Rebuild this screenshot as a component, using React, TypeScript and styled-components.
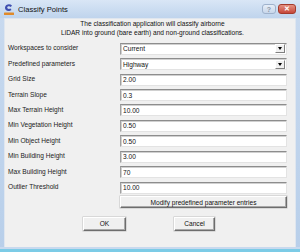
import {Fragment} from "react";
import styled, {createGlobalStyle} from "styled-components";

const Global = createGlobalStyle`
	html, body { margin: 0; padding: 0; background: #ffffff; }
	body { font-family: "Liberation Sans", Arial, sans-serif; }
`;

const Win = styled.div`
	width: 300px;
	height: 252px;
	display: flex;
	flex-direction: column;
	background: linear-gradient(#c9daef, #b8cfea);
	overflow: hidden;
`;
const TitleBar = styled.div`
	height: 18px;
	display: flex;
	align-items: center;
	padding: 0 4px 0 3px;
	background: linear-gradient(#d9e6f6, #bfd4ed);
`;
const Title = styled.span`
	font-size: 7.6px;
	color: #111;
	margin-left: 3px;
	flex: 1;
`;
const CapBtn = styled.div<{$close?: boolean}>`
	height: 10px;
	width: ${p => p.$close ? "18px" : "14px"};
	margin-left: 2px;
	border-radius: 3px;
	border: 1px solid ${p => p.$close ? "#a33a2c" : "#9fb2cc"};
	background: ${p => p.$close ? "linear-gradient(#e49182, #c6473a)" : "linear-gradient(#e6eef8, #c7d6ea)"};
	color: ${p => p.$close ? "#fff" : "#8a97a8"};
	font-size: 7px;
	font-weight: bold;
	display: flex;
	align-items: center;
	justify-content: center;
	box-sizing: border-box;
`;
const Body = styled.div`
	flex: 1;
	margin: 0 4px;
	background: #f0f0f0;
	border: 1px solid #dfe6ef;
	border-bottom: none;
	display: flex;
	flex-direction: column;
`;
const Description = styled.div`
	margin-top: 1px;
	padding-left: 5px;
	text-align: center;
	font-size: 6.6px;
	line-height: 8.5px;
	color: #111;
`;
const Form = styled.div`
	margin-top: 3px;
	display: grid;
	grid-template-columns: 112px 167px;
	grid-auto-rows: 15.45px;
	padding-left: 3px;
	align-items: center;
`;
const Label = styled.span`
	font-size: 6.6px;
	color: #222;
`;
const Field = styled.div`
	height: 12px;
	box-sizing: border-box;
	background: #fff;
	border-top: 1px solid #8d8d8d;
	border-left: 1px solid #a0a0a0;
	border-right: 1px solid #e3e3e3;
	border-bottom: 1px solid #e3e3e3;
	box-shadow: inset 1px 1px 0 #d0d0d0;
	font-size: 6.6px;
	color: #111;
	display: flex;
	align-items: center;
	padding-left: 2px;
	margin-top: 2px;
`;
const SelectText = styled.span`
	flex: 1;
`;
const Arrow = styled.div`
	width: 10px;
	height: 9px;
	margin-right: 1px;
	background: #f0f0f0;
	border-right: 1px solid #808080;
	border-bottom: 1px solid #808080;
	border-top: 1px solid #fff;
	border-left: 1px solid #fff;
	box-sizing: border-box;
	display: flex;
	align-items: center;
	justify-content: center;
	&::after {
		content: "";
		border-left: 2.5px solid transparent;
		border-right: 2.5px solid transparent;
		border-top: 3px solid #000;
	}
`;
const Button = styled.div<{$w?: number}>`
	height: ${p => p.$w ? "14px" : "12px"};
	width: ${p => p.$w ? p.$w + "px" : "auto"};
	box-sizing: border-box;
	background: #f0f0f0;
	border-top: 1px solid #fff;
	border-left: 1px solid #fff;
	border-right: 1px solid #6d6d6d;
	border-bottom: 1px solid #6d6d6d;
	box-shadow: inset -1px -1px 0 #a8a8a8, 0 0 0 0.5px #c0c0c0;
	font-size: 6.6px;
	color: #111;
	display: flex;
	align-items: center;
	justify-content: center;
`;
const Actions = styled.div`
	display: flex;
	gap: 48px;
	padding-left: 78px;
	margin-top: 7px;
`;
const Frame = styled.div`
	height: 5px;
	display: flex;
	flex-direction: column;
`;
const FrameLine = styled.div<{$c: string; $h: number}>`
	height: ${p => p.$h}px;
	background: ${p => p.$c};
`;

const rows: [string, string][] = [
	["Grid Size", "2.00"],
	["Terrain Slope", "0.3"],
	["Max Terrain Height", "10.00"],
	["Min Vegetation Height", "0.50"],
	["Min Object Height", "0.50"],
	["Min Building Height", "3.00"],
	["Max Building Height", "70"],
	["Outlier Threshold", "10.00"],
];

function AppIcon() {
	return (
		<svg width="12" height="13" viewBox="0 0 12 13">
			<path d="M9 2.5 C7 0.5 2.5 1 2 4.5 C1.8 7 4 8.5 6.5 8 L8.5 7 L7.5 5.5 C6 6.2 4.2 6 4.2 4.5 C4.4 3 6.5 2.6 7.8 4 Z" fill="#3f4fb0"/>
			<rect x="1" y="9.5" width="10" height="2.5" rx="0.5" fill="#e08a2a"/>
		</svg>
	);
}

export default function App() {
	return (
		<Win>
			<Global/>
			<TitleBar>
				<AppIcon/>
				<Title>Classify Points</Title>
				<CapBtn>?</CapBtn>
				<CapBtn $close>✕</CapBtn>
			</TitleBar>
			<Body>
				<Description>
					The classification application will classify airborne<br/>
					LiDAR into ground (bare earth) and non-ground classifications.
				</Description>
				<Form>
					<Label>Workspaces to consider</Label>
					<Field><SelectText>Current</SelectText><Arrow/></Field>
					<Label>Predefined parameters</Label>
					<Field><SelectText>Highway</SelectText><Arrow/></Field>
					{rows.map(([label, value]) => (
						<Fragment key={label}>
							<Label>{label}</Label>
							<Field>{value}</Field>
						</Fragment>
					))}
					<span/>
					<Button>Modify predefined parameter entries</Button>
				</Form>
				<Actions>
					<Button $w={43}>OK</Button>
					<Button $w={41}>Cancel</Button>
				</Actions>
			</Body>
			<Frame>
				<FrameLine $c="#c8d9ee" $h={2}/>
				<FrameLine $c="#7ccbe6" $h={3}/>
			</Frame>
		</Win>
	);
}
